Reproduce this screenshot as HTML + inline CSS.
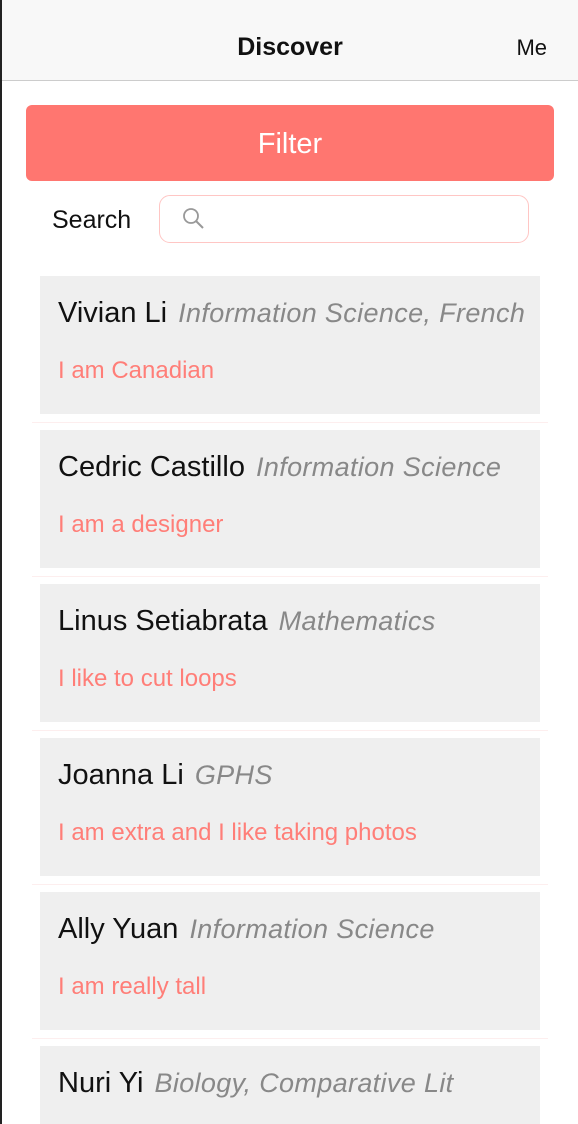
<!DOCTYPE html><html><head><style>
html,body{margin:0;width:578px;height:1124px;overflow:hidden}
body{background:#fff;font-family:"Liberation Sans",sans-serif;position:relative}
.edge{position:absolute;left:0;top:0;width:2px;height:1124px;background:#222}
.hdr{position:absolute;left:2px;top:0;width:576px;height:80px;background:#f8f8f8;border-bottom:1px solid #ccc}
.t{position:absolute;left:0;right:0;top:33px;text-align:center;font-size:25px;font-weight:bold;color:#111}
.me{position:absolute;right:31px;top:35px;font-size:22px;color:#111}
.btn{position:absolute;left:26px;top:105px;width:528px;height:76px;background:#ff7670;border-radius:6px;color:#fff;font-size:29px;text-align:center;line-height:78px}
.sl{position:absolute;left:52px;top:206px;font-size:25px;color:#111}
.in{position:absolute;left:159px;top:195px;width:368px;height:46px;border:1px solid #ffc6c4;border-radius:11px}
.card{position:absolute;left:40px;width:500px;height:138px;background:#efefef;overflow:hidden}
.n{position:absolute;left:18px;top:21px;font-size:29px;color:#111;white-space:nowrap}
.n i{color:#888;font-size:27px;letter-spacing:0.35px;margin-left:3px}
.d{position:absolute;left:18px;top:81px;font-size:24px;color:#ff7e78}
.sep{position:absolute;left:32px;width:516px;height:1px;background:#fdeeee}
</style></head><body>
<div class="edge"></div>
<div class="hdr"><div class="t">Discover</div><div class="me">Me</div></div>
<div class="btn">Filter</div>
<div class="sl">Search</div>
<div class="in"><svg width="26" height="26" style="position:absolute;left:21px;top:10px" viewBox="0 0 26 26"><circle cx="10" cy="10" r="7" fill="none" stroke="#999" stroke-width="1.8"/><line x1="15" y1="15" x2="22" y2="22" stroke="#999" stroke-width="2"/></svg></div>
<div class="card" style="top:276px"><div class="n">Vivian Li <i>Information Science, French</i></div><div class="d">I am Canadian</div></div>
<div class="sep" style="top:422px"></div>
<div class="card" style="top:430px"><div class="n">Cedric Castillo <i>Information Science</i></div><div class="d">I am a designer</div></div>
<div class="sep" style="top:576px"></div>
<div class="card" style="top:584px"><div class="n">Linus Setiabrata <i>Mathematics</i></div><div class="d">I like to cut loops</div></div>
<div class="sep" style="top:730px"></div>
<div class="card" style="top:738px"><div class="n">Joanna Li <i>GPHS</i></div><div class="d">I am extra and I like taking photos</div></div>
<div class="sep" style="top:884px"></div>
<div class="card" style="top:892px"><div class="n">Ally Yuan <i>Information Science</i></div><div class="d">I am really tall</div></div>
<div class="sep" style="top:1038px"></div>
<div class="card" style="top:1046px;height:78px"><div class="n">Nuri Yi <i>Biology, Comparative Lit</i></div></div>
</body></html>
